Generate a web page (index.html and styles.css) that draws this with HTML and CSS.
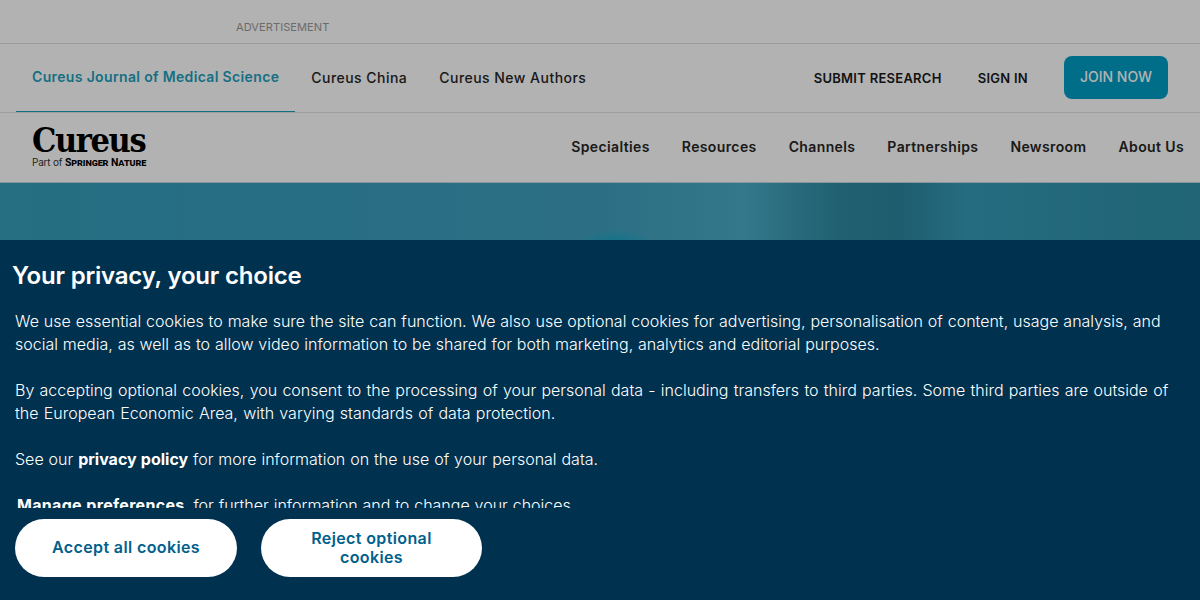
FILE: index.html
```html
<!DOCTYPE html>
<html lang="en">
<head>
    <meta charset="UTF-8">
    <meta name="viewport" content="width=device-width, initial-scale=1.0">
    <title>Cureus</title>
    <link rel="stylesheet" href="styles.css">
</head>
<body>
    <div class="ad-bar">
        <span class="ad-label">ADVERTISEMENT</span>
    </div>

    <div class="top-nav">
        <div class="site-tabs">
            <a class="site-tab active" href="#">Cureus Journal of Medical Science</a>
            <a class="site-tab" href="#">Cureus China</a>
            <a class="site-tab" href="#">Cureus New Authors</a>
        </div>
        <div class="user-links">
            <a class="user-link" href="#">SUBMIT RESEARCH</a>
            <a class="user-link" href="#">SIGN IN</a>
            <a class="join-btn" href="#">JOIN NOW</a>
        </div>
    </div>

    <div class="main-nav">
        <a class="logo" href="#">
            <span class="logo-name">Cureus</span>
            <span class="logo-sub">Part of <strong>Springer Nature</strong></span>
        </a>
        <div class="main-links">
            <a href="#">Specialties</a>
            <a href="#">Resources</a>
            <a href="#">Channels</a>
            <a href="#">Partnerships</a>
            <a href="#">Newsroom</a>
            <a href="#">About Us</a>
        </div>
    </div>

    <div class="hero"></div>

    <div class="overlay"></div>

    <div class="cookie-banner">
        <h2>Your privacy, your choice</h2>
        <div class="cookie-text">
            <p>We use essential cookies to make sure the site can function. We also use optional cookies for advertising, personalisation of content, usage analysis, and social media, as well as to allow video information to be shared for both marketing, analytics and editorial purposes.</p>
            <p class="wide">By accepting optional cookies, you consent to the processing of your personal data - including transfers to third parties. Some third parties are outside of the European Economic Area, with varying standards of data protection.</p>
            <p>See our <a href="#">privacy policy</a> for more information on the use of your personal data.</p>
            <p><a class="manage" href="#">Manage preferences</a> for further information and to change your choices.</p>
        </div>
        <div class="cookie-buttons">
            <button class="accept-btn">Accept all cookies</button>
            <button class="reject-btn">Reject optional cookies</button>
        </div>
    </div>
</body>
</html>
```

FILE: styles.css
```css
* {
    box-sizing: border-box;
}
html, body {
    height: 600px;
    overflow: hidden;
}
body {
    margin: 0;
    font-family: 'Inter', sans-serif;
    background-color: #fff;
    color: #222;
    position: relative;
}
a {
    text-decoration: none;
    color: inherit;
}
.ad-bar {
    height: 44px;
    padding: 20px 0 0 236px;
    border-bottom: 1px solid #dcdcdc;
}
.ad-label {
    display: block;
    font-size: 11px;
    line-height: 14px;
    letter-spacing: 0.1px;
    color: #9a9a9a;
}
.top-nav {
    height: 69px;
    padding: 0 32px 0 16px;
    display: flex;
    justify-content: space-between;
    border-bottom: 1px solid #e2e2e2;
}
.site-tabs {
    display: flex;
}
.site-tab {
    padding: 0 16px 2px;
    display: flex;
    align-items: center;
    height: 68px;
    font-size: 14px;
    font-weight: 500;
    letter-spacing: 0.47px;
    color: #262626;
}
.site-tab.active {
    color: #1d9fbc;
    font-weight: 600;
    letter-spacing: 0.35px;
    padding-bottom: 2px;
    border-bottom: 1px solid #1d9fbc;
}
.user-links {
    display: flex;
    align-items: center;
    gap: 36px;
}
.user-link {
    font-size: 13px;
    font-weight: 600;
    letter-spacing: 0.27px;
    color: #1a1a1a;
}
.join-btn {
    width: 104px;
    height: 43px;
    margin-top: -1px;
    padding-bottom: 2px;
    display: flex;
    align-items: center;
    justify-content: center;
    border-radius: 8px;
    background-color: #009dc4;
    color: #fff;
    font-size: 14px;
    font-weight: 500;
}
.main-nav {
    height: 69px;
    padding: 0 16px 0 32px;
    display: flex;
    justify-content: space-between;
    align-items: center;
}
.logo {
    display: flex;
    flex-direction: column;
    color: #000;
}
.logo-name {
    font-family: 'DejaVu Serif Condensed', 'DejaVu Serif', serif;
    font-size: 34px;
    font-weight: 700;
    line-height: 28px;
    letter-spacing: -1.4px;
}
.logo-sub {
    margin-top: 2px;
    font-size: 10px;
    line-height: 12px;
    letter-spacing: -0.2px;
    color: #333;
}
.logo-sub strong {
    font-family: 'Roboto', sans-serif;
    font-size: 10.5px;
    font-weight: 700;
    font-variant: small-caps;
    letter-spacing: -0.1px;
    color: #000;
}
.main-links {
    display: flex;
    gap: 32px;
    margin-bottom: 3px;
    font-size: 14px;
    font-weight: 600;
    letter-spacing: 0.38px;
    color: #262626;
}
.hero {
    height: 418px;
    border-top: 1px solid #c4d8de;
    background:
        radial-gradient(ellipse 36px 10px at 615px 57px, #1fa6c4, transparent),
        linear-gradient(90deg, #369fbb 0, #399dbd 300px, #40a0be 600px, #4aacc7 745px, #2e8aa2 840px, #2c86a0 900px, #369bb7 965px, #2f90a9 1200px);
}
.overlay {
    position: absolute;
    inset: 0;
    background-color: rgba(0, 0, 0, 0.3);
}
.cookie-banner {
    position: absolute;
    left: 0;
    right: 0;
    top: 240px;
    bottom: 0;
    padding: 0 25px 0 15px;
    background-color: #00314f;
    color: #fff;
}
.cookie-banner h2 {
    margin: 21px 0 0 -3px;
    font-size: 24px;
    line-height: 30px;
    font-weight: 600;
    letter-spacing: -0.2px;
}
.cookie-text {
    height: 198px;
    margin-top: 19px;
    overflow: hidden;
    font-size: 16px;
    font-weight: 300;
    line-height: 22.6px;
    word-spacing: 0.4px;
}
.cookie-text p {
    margin: 0 0 23.8px;
}
.cookie-text .wide {
    word-spacing: 0.75px;
}
.cookie-text a {
    font-weight: 700;
}
.cookie-text .manage {
    margin-left: 2px;
    margin-right: 4px;
    letter-spacing: 0.3px;
}
.cookie-buttons {
    margin-top: 11px;
    display: flex;
    gap: 24px;
}
.cookie-buttons button {
    height: 58px;
    padding: 0 30px;
    border: none;
    border-radius: 29px;
    background-color: #fff;
    color: #01608c;
    font-family: inherit;
    font-size: 16px;
    font-weight: 600;
    line-height: 19px;
    letter-spacing: 0.38px;
}
.cookie-buttons .accept-btn {
    width: 222px;
    padding-bottom: 2px;
}
.cookie-buttons .reject-btn {
    width: 221px;
}
```
